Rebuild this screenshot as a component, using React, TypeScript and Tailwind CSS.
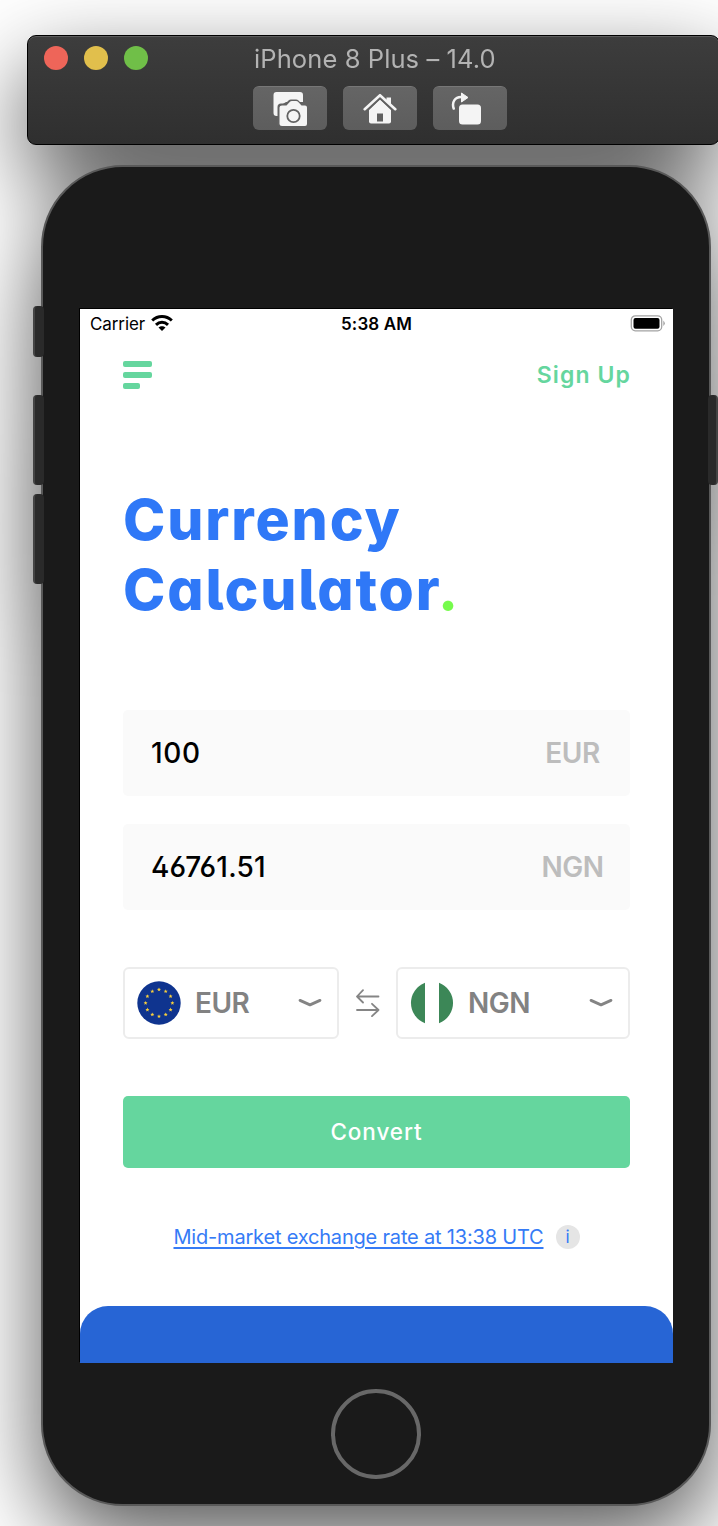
import React from "react";

function Camera() {
  return (
    <svg width="36" height="36" viewBox="0 0 36 36" className="shrink-0">
      <path d="M4.500 1H28q3 0 3 3v7H14l-8 5v9H4.500q-3 0-3-3V4q0-3 3-3z" fill="#f4f4f4" />
      <path
        d="M9 12.500h4.500l3-3q1-1 2.500-1h5q1.500 0 2.500 1l3 3H35v22H5.500V16q0-3.500 3.500-3.500z"
        fill="#626262"
      />
      <path
        d="M10 14.500h4.500l3-3.200q1-1.200 2.500-1.200h4q1.500 0 2.500 1.200l3 3.200h3.500q2 0 2 2V33q0 2-2 2H10q-2.500 0-2.500-2V16.500q0-2 2.500-2z"
        fill="#f4f4f4"
      />
      <circle cx="21.500" cy="25" r="6.200" fill="none" stroke="#626262" strokeWidth="1.800" />
    </svg>
  );
}

function House() {
  return (
    <svg width="34" height="32" viewBox="0 0 34 32" className="shrink-0" fill="#f4f4f4">
      <path d="M17 6.500 28 17v11.500q0 2-2 2H8q-2 0-2-2V17z" />
      <path d="M14 20.500h6v8h-6z" fill="#606060" />
      <path d="M1.500 17.500 17 3l15.500 14.500" fill="none" stroke="#606060" strokeWidth="5" />
      <path d="M1.700 16.200 17 2.200l15.300 14" fill="none" stroke="#f4f4f4" strokeWidth="2.600" strokeLinecap="round" strokeLinejoin="round" />
      <path d="M23.500 4.500h4.500V13l-4.500-4z" />
    </svg>
  );
}

function Rotate() {
  return (
    <svg width="30" height="33" viewBox="0 0 30 33" className="shrink-0" fill="#f4f4f4">
      <path d="M2.700 16.500C.5 10 4 5 10 5h1.500" fill="none" stroke="#f4f4f4" strokeWidth="2.500" strokeLinecap="round" />
      <path d="M10.500 1 17 5.500 10.500 10z" stroke="#f4f4f4" strokeWidth="1" strokeLinejoin="round" />
      <rect x="8" y="12.500" width="22" height="20" rx="3.500" />
    </svg>
  );
}

function Wifi() {
  return (
    <svg width="22" height="16" viewBox="0 0 22 16" fill="none" stroke="#000" strokeWidth="3">
      <path d="M1.200 5.500C6.800.300 15.200.300 20.800 5.500" />
      <path d="M5 9.800c3.500-3.300 8.500-3.300 12 0" />
      <path d="M11 16 7.500 12.600c2-1.900 5-1.900 7 0z" fill="#000" stroke="none" />
    </svg>
  );
}

function Battery() {
  return (
    <svg width="36" height="17" viewBox="0 0 36 17">
      <rect x="1.300" y=".8" width="30.400" height="15" rx="4" fill="none" stroke="#a3a3a3" strokeWidth="1.300" />
      <rect x="3.500" y="2.900" width="26" height="10.800" rx="2" fill="#000" />
      <path d="M33.300 5.500q3 2.800 0 5.600z" fill="#a3a3a3" />
    </svg>
  );
}

function EuFlag() {
  const stars = Array.from({ length: 12 }, (_, i) => {
    const t = (i * Math.PI) / 6;
    const cx = 22 + 13.4 * Math.sin(t);
    const cy = 22 - 13.4 * Math.cos(t);
    return Array.from({ length: 10 }, (_, k) => {
      const r = k % 2 ? 0.95 : 2.1;
      const a = (k * Math.PI) / 5;
      return `${cx + r * Math.sin(a)},${cy - r * Math.cos(a)}`;
    }).join(" ");
  });
  return (
    <svg width="44" height="44" viewBox="0 0 44 44" className="shrink-0">
      <circle cx="22" cy="22" r="21.700" fill="#0f348f" />
      {stars.map((p) => (
        <polygon key={p} points={p} fill="#f9d03c" />
      ))}
    </svg>
  );
}

function NgFlag() {
  return (
    <svg width="44" height="44" viewBox="0 0 44 44" className="shrink-0" fill="#3c8757">
      <path d="M15 1.700A21.700 21.700 0 0 0 15 42.300z" />
      <path d="M29 1.700A21.700 21.700 0 0 1 29 42.300z" />
    </svg>
  );
}

function Chevron() {
  return (
    <svg width="24" height="10" viewBox="0 0 24 10" fill="none" stroke="#848484" strokeWidth="2.800" strokeLinecap="round" strokeLinejoin="round">
      <path d="M2 2.400 12 6.900 22 2.400" />
    </svg>
  );
}

function Swap() {
  return (
    <svg width="24" height="28" viewBox="0 0 24 28" fill="none" stroke="#858585" strokeWidth="1.800" strokeLinecap="round" strokeLinejoin="round">
      <path d="M22.500 7.500H1M7 1.200 1 7.500l6 6M1 21h21.500M16 14.800l6.500 6.200-6.500 6.200" />
    </svg>
  );
}

function ToolButton({ children }: { children: React.ReactNode }) {
  return (
    <div className="flex h-11 w-[74px] items-center justify-center rounded-[6px] border-t border-[#777] bg-linear-to-b from-[#656565] to-[#5d5d5d]">
      {children}
    </div>
  );
}

function Amount({ value, code, spacing }: { value: string; code: string; spacing: string }) {
  return (
    <div className="flex h-[86px] items-center justify-between rounded-[5px] bg-[#fafafa] pl-[28px]">
      <span className={spacing + " text-[28px] font-medium text-black [font-feature-settings:'ss01']"}>{value}</span>
      <span className="w-[115px] text-center text-[28px] font-semibold tracking-[-0.500px] text-[#bdbdbd]">{code}</span>
    </div>
  );
}

function Picker({ flag, code, wide }: { flag: React.ReactNode; code: string; wide?: boolean }) {
  return (
    <div className={(wide ? "w-[234px] " : "w-[216px] ") + "flex h-[72px] items-center rounded-[6px] border-2 border-[#ececec] pr-[15px] pl-[12px]"}>
      {flag}
      <span className="ml-[14px] flex-1 text-[28px] font-semibold tracking-[-0.500px] text-[#828282]">{code}</span>
      <Chevron />
    </div>
  );
}

export default function App() {
  return (
    <div className="h-[1526px] w-[718px] overflow-hidden bg-white font-['Inter',sans-serif]">
      <div className="flex w-[752px] flex-col pt-[35px] drop-shadow-[0_34px_44px_rgba(0,0,0,0.66)]">
        <header className="ml-[27px] flex h-[110px] w-[693px] flex-col rounded-[9px] border border-black bg-linear-to-b from-[#3d3d3d] to-[#2f2f2f] shadow-[inset_0_1px_0_#5c5c5c]">
          <div className="flex h-[45px] items-center pl-4">
            <div className="-mt-px flex gap-4">
              <span className="size-6 rounded-full bg-[#ee6559]" />
              <span className="size-6 rounded-full bg-[#e1bf4c]" />
              <span className="size-6 rounded-full bg-[#70bf48]" />
            </div>
            <h1 className="mt-[2px] ml-[106px] text-[25.500px] tracking-[0.100px] whitespace-nowrap text-[#b3b3b3]">iPhone 8 Plus – 14.0</h1>
          </div>
          <div className="ml-[225px] flex gap-4 pt-[5px]">
            <ToolButton><span className="-ml-px flex"><Camera /></span></ToolButton>
            <ToolButton><House /></ToolButton>
            <ToolButton><span className="-ml-2 flex"><Rotate /></span></ToolButton>
          </div>
        </header>

        <div className="relative mt-[20px] ml-[41px] h-[1341px] w-[670px] rounded-[82px] border-2 border-[#595959] bg-[#1a1a1a] pt-[142px] pl-[37px]">
          <i className="absolute top-[139px] -left-[10px] h-[51px] w-[11px] rounded-[4px] border-l-2 border-[#444] bg-[#2a2a2a]" />
          <i className="absolute top-[228px] -left-[10px] h-[90px] w-[11px] rounded-[4px] border-l-2 border-[#444] bg-[#2a2a2a]" />
          <i className="absolute top-[327px] -left-[10px] h-[90px] w-[11px] rounded-[4px] border-l-2 border-[#444] bg-[#2a2a2a]" />
          <i className="absolute top-[228px] -right-[9px] h-[90px] w-[10px] rounded-[4px] border-r-2 border-[#444] bg-[#2a2a2a]" />

          <main className="flex h-[1054px] w-[593px] flex-col bg-white shadow-[-1px_-1px_0_#000]">
            <div className="grid h-[30px] grid-cols-3 items-center pr-[7px] pl-[10px] text-[17px] text-black">
              <span className="flex items-center gap-[6px] tracking-[-0.100px]"><span className="pt-[2px]">Carrier</span> <span className="-mt-[2px]"><Wifi /></span></span>
              <span className="-ml-[3px] pt-[2px] text-center font-semibold tracking-[0.100px] whitespace-nowrap">5:38 AM</span>
              <span className="-mt-[2px] flex justify-end"><Battery /></span>
            </div>

            <div className="flex flex-1 flex-col px-[43px]">
              <nav className="mt-[16px] flex h-10 items-center justify-between">
                <div className="flex flex-col gap-[5px]">
                  <span className="h-[6px] w-[29px] rounded-[2px] bg-[#65d69e]" />
                  <span className="h-[6px] w-[29px] rounded-[2px] bg-[#65d69e]" />
                  <span className="h-[6px] w-[17px] rounded-[2px] bg-[#65d69e]" />
                </div>
                <span className="-mr-px text-[23px] font-semibold tracking-[1.100px] text-[#65d69e] [font-feature-settings:'cv11']">Sign Up</span>
              </nav>

              <h2 className="mt-[90px] text-[57px] leading-[70px] font-extrabold tracking-[1.850px] text-[#2f78f7] [font-feature-settings:'cv11','cv05']">
                Currency
                <br />
                Calculator<span className="text-[#76fb4c]">.</span>
              </h2>

              <section className="mt-[85px] flex flex-col gap-[28px]">
                <Amount value="100" code="EUR" spacing="tracking-[0.700px]" />
                <Amount value="46761.51" code="NGN" spacing="tracking-[0.150px]" />
              </section>

              <section className="mt-[57px] flex items-center justify-between">
                <Picker flag={<EuFlag />} code="EUR" />
                <Swap />
                <Picker flag={<NgFlag />} code="NGN" wide />
              </section>

              <button className="mt-[57px] h-[72px] rounded-[5px] bg-[#65d69e] text-[22.500px] font-medium tracking-[0.900px] text-white">
                Convert
              </button>

              <div className="mt-[54px] flex items-center justify-center gap-[12px]">
                <a className="text-[20px] tracking-[-0.190px] whitespace-nowrap text-[#357bf6] underline decoration-[1.500px] underline-offset-[3px]">Mid-market exchange rate at 13:38 UTC</a>
                <span className="flex size-6 items-center justify-center rounded-full bg-[#e5e5e5] pt-px text-[17px] text-[#357bf6]">i</span>
              </div>
            </div>

            <div className="h-[57px] rounded-t-[28px] bg-[#2765d5]" />
          </main>

          <div className="mt-[26px] ml-[251px] size-[90px] rounded-full border-4 border-[#686868]" />
        </div>
      </div>
    </div>
  );
}
